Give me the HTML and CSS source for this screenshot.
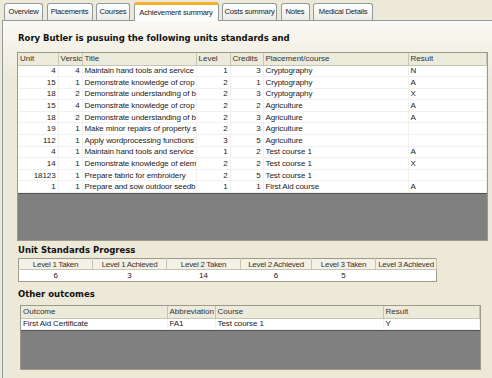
FILE: index.html
```html
<!DOCTYPE html>
<html lang="en">
<head>
    <meta charset="UTF-8">
    <title>Achievement summary</title>
    <link rel="stylesheet" href="styles.css">
</head>
<body>
    <div class="tabs">
        <div class="tab">Overview</div>
        <div class="tab">Placements</div>
        <div class="tab">Courses</div>
        <div class="tab active">Achievement summary</div>
        <div class="tab">Costs summary</div>
        <div class="tab">Notes</div>
        <div class="tab">Medical Details</div>
    </div>
    <div class="panel">
        <h2 class="heading first">Rory Butler is pusuing the following units standards and</h2>
        <div class="grid units">
            <table>
                <colgroup>
                    <col style="width:40px"><col style="width:24px"><col style="width:114px">
                    <col style="width:34px"><col style="width:33px"><col style="width:145px"><col>
                </colgroup>
                <thead>
                    <tr><th>Unit</th><th>Versic</th><th>Title</th><th>Level</th><th>Credits</th><th>Placement/course</th><th>Result</th></tr>
                </thead>
                <tbody id="unit-rows"></tbody>
            </table>
            <div class="empty"></div>
        </div>

        <h2 class="heading">Unit Standards Progress</h2>
        <table class="progress">
            <colgroup>
                <col style="width:74px"><col style="width:74px"><col style="width:74px">
                <col style="width:71px"><col style="width:64px"><col>
            </colgroup>
            <tr><th>Level 1 Taken</th><th>Level 1 Achieved</th><th>Level 2 Taken</th><th>Level 2 Achieved</th><th>Level 3 Taken</th><th>Level 3 Achieved</th></tr>
            <tr><td>6</td><td>3</td><td>14</td><td>6</td><td>5</td><td></td></tr>
        </table>

        <h2 class="heading last">Other outcomes</h2>
        <div class="grid outcomes">
            <table>
                <colgroup>
                    <col style="width:146px"><col style="width:48px"><col style="width:168px"><col>
                </colgroup>
                <thead>
                    <tr><th>Outcome</th><th>Abbreviation</th><th>Course</th><th>Result</th></tr>
                </thead>
                <tbody>
                    <tr><td>First Aid Certificate</td><td>FA1</td><td>Test course 1</td><td>Y</td></tr>
                </tbody>
            </table>
            <div class="empty"></div>
        </div>
    </div>

    <script>
        const units = [
            [4, 4, "Maintain hand tools and service", 1, 3, "Cryptography", "N"],
            [15, 1, "Demonstrate knowledge of crop", 2, 1, "Cryptography", "A"],
            [18, 2, "Demonstrate understanding of b", 2, 3, "Cryptography", "X"],
            [15, 4, "Demonstrate knowledge of crop", 2, 2, "Agriculture", "A"],
            [18, 2, "Demonstrate understanding of b", 2, 3, "Agriculture", "A"],
            [19, 1, "Make minor repairs of property s", 2, 3, "Agriculture", ""],
            [112, 1, "Apply wordprocessing functions", 3, 5, "Agriculture", ""],
            [4, 1, "Maintain hand tools and service", 1, 2, "Test course 1", "A"],
            [14, 1, "Demonstrate knowledge of elem", 2, 2, "Test course 1", "X"],
            [18123, 1, "Prepare fabric for embroidery", 2, 5, "Test course 1", ""],
            [1, 1, "Prepare and sow outdoor seedb", 1, 1, "First Aid course", "A"]
        ];

        const body = document.getElementById("unit-rows");
        units.forEach(u => {
            const tr = document.createElement("tr");
            tr.innerHTML = `<td class="num">${u[0]}</td><td class="num">${u[1]}</td><td>${u[2]}</td>` +
                `<td class="num">${u[3]}</td><td class="num">${u[4]}</td><td>${u[5]}</td><td>${u[6]}</td>`;
            body.appendChild(tr);
        });
    </script>
</body>
</html>
```

FILE: styles.css
```css
* {
    box-sizing: border-box;
}

body {
    margin: 0;
    background: #ece9d8;
    font-family: "Liberation Sans", Arial, sans-serif;
    font-size: 8px;
    color: #000;
    height: 378px;
    overflow: hidden;
}

.tabs {
    display: grid;
    grid-template-columns: 39px 46px 34px 85px 55px 29px 60px;
    column-gap: 3.5px;
    align-items: end;
    padding: 2px 0 0 4px;
    height: 20px;
}

.tab {
    height: 17px;
    line-height: 15px;
    border: 1px solid #919b9c;
    border-bottom: none;
    border-radius: 3px 3px 0 0;
    background: linear-gradient(#ffffff, #ecebe5);
    color: #222;
    font-size: 7.6px;
    white-space: nowrap;
    text-align: center;
    margin-bottom: 1px;
    letter-spacing: -0.2px;
    overflow: hidden;
}

.tab.active {
    height: 19px;
    margin-bottom: 0;
    border-top: 3px solid #f6b12b;
    background: #fcfcfa;
    position: relative;
    z-index: 1;
}

.panel {
    margin-left: 2px;
    border-top: 1px solid #919b9c;
    border-left: 1px solid #919b9c;
    background: linear-gradient(#faf9f3, #ece9d8 60px);
    padding: 0 0 0 14px;
    height: 358px;
}

.heading {
    font-family: "DejaVu Sans", Verdana, sans-serif;
    font-weight: bold;
    font-size: 8.5px;
    margin: 0;
    padding: 4px 0 3px 1px;
    color: #111;
    white-space: nowrap;
}

.heading.first {
    padding: 12px 0 9px 1px;
}

.heading.last {
    padding: 7px 0 6px 1px;
}

.grid {
    display: flex;
    flex-direction: column;
    border: 1px solid #9d9a8a;
    background: #fff;
}

.grid table {
    border-collapse: collapse;
    table-layout: fixed;
    width: 100%;
}

.grid th {
    background: #ebeadb;
    font-weight: normal;
    text-align: left;
    height: 12px;
    padding: 0 2px;
    border-right: 1px solid #c7c5b2;
    border-bottom: 1px solid #c7c5b2;
    white-space: nowrap;
    overflow: hidden;
    color: #333;
}

.grid td {
    height: 11.6px;
    padding: 0 2px;
    border-right: 1px solid #f1f1f1;
    border-bottom: 1px solid #f1f1f1;
    white-space: nowrap;
    overflow: hidden;
    color: #222;
    letter-spacing: -0.1px;
}

.grid td.num {
    text-align: right;
}

.empty {
    flex: 1;
    background: #808080;
    border-top: 1px solid #555;
}

.units {
    width: 471px;
    height: 189px;
}

.outcomes {
    width: 461px;
    height: 65px;
    margin-left: 3px;
}

.progress {
    border-collapse: collapse;
    table-layout: fixed;
    width: 419px;
    margin-left: 1px;
    border: 1px solid #9d9a8a;
}

.progress th {
    font-weight: normal;
    background: #f3f1e6;
    height: 11px;
    padding: 0;
    border-right: 1px solid #c7c5b2;
    border-bottom: 1px solid #c7c5b2;
    color: #333;
    text-align: center;
    white-space: nowrap;
    overflow: hidden;
    letter-spacing: -0.3px;
}

.progress td {
    background: #fff;
    height: 12px;
    text-align: center;
    color: #222;
}
```
